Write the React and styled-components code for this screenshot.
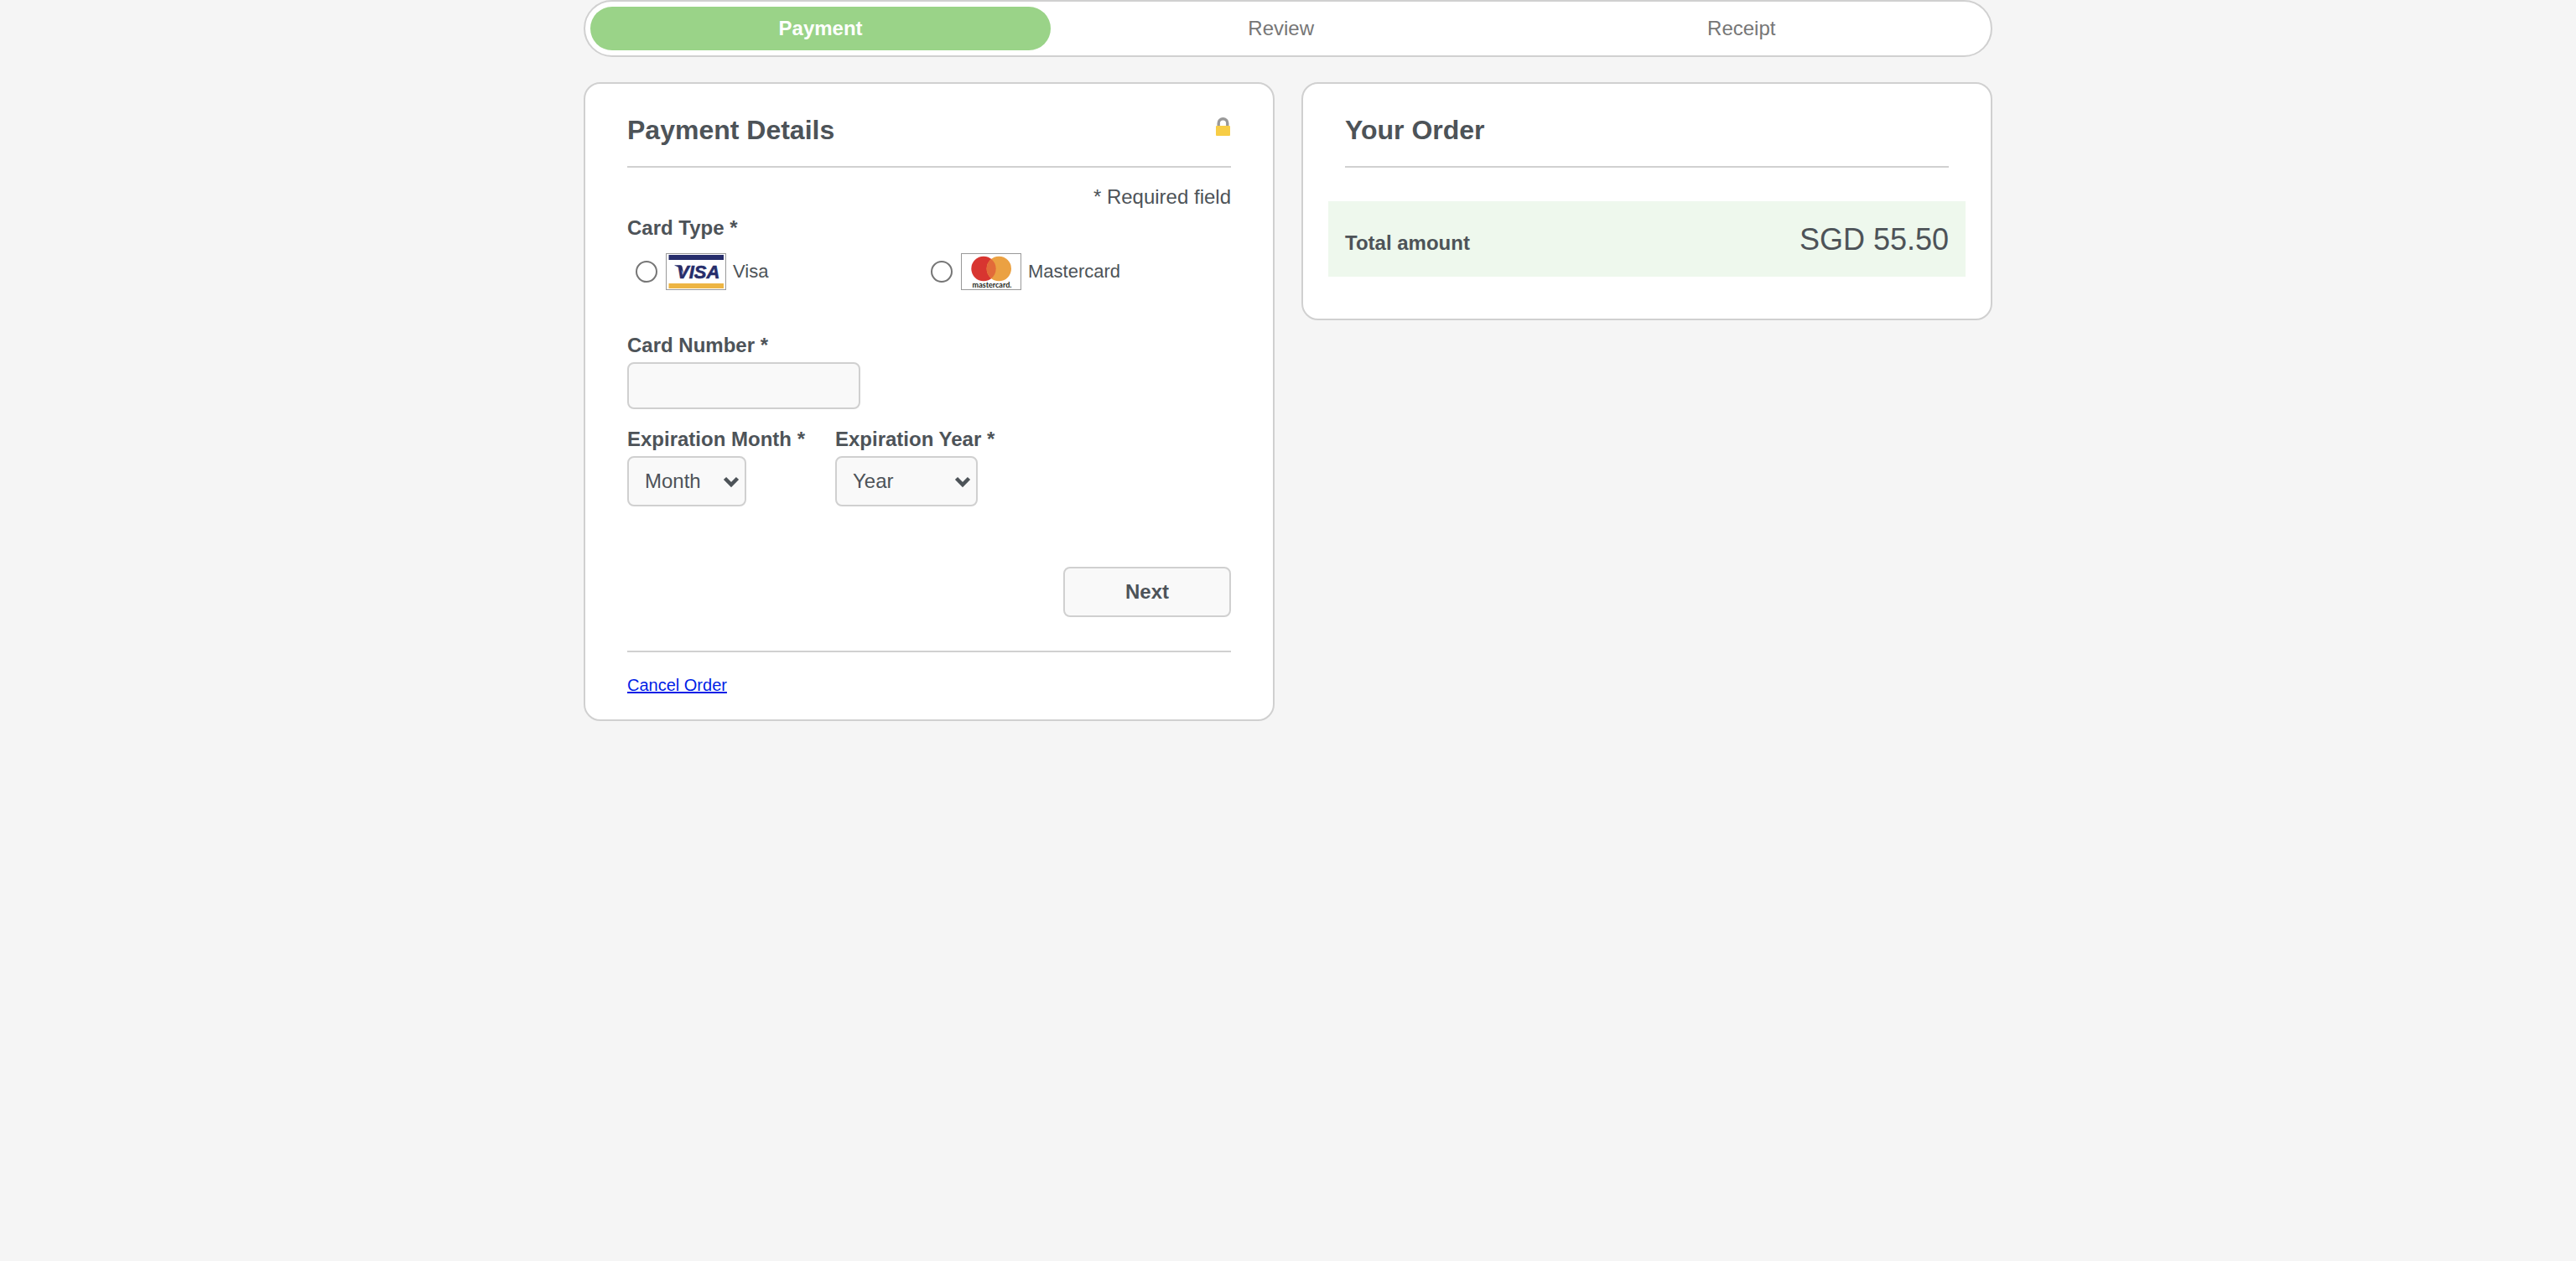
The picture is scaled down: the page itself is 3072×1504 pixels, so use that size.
import React from "react";
import styled, { createGlobalStyle, css } from "styled-components";

const color = {
  page: "#f5f5f5",
  surface: "#ffffff",
  field: "#f9f9f9",
  line: "#d0d0d0",
  text: "#4d5358",
  muted: "#767676",
  active: "#9ad388",
  highlight: "#eef8ed",
  link: "#001ee6",
};

const GlobalStyle = createGlobalStyle`
  *, *::before, *::after { box-sizing: border-box; }
  body {
    margin: 0;
    background: ${color.page};
    color: ${color.text};
    font-family: Arial, "Liberation Sans", sans-serif;
    font-size: 24px;
    line-height: 34px;
  }
`;

const Page = styled.div`
  max-width: 1680px;
  margin: 0 auto;
`;

const Steps = styled.ol`
  display: flex;
  margin: 0 0 30px;
  padding: 6px;
  list-style: none;
  background: ${color.surface};
  border: 2px solid ${color.line};
  border-radius: 34px;
`;

const Step = styled.li`
  width: 33%;
  border-radius: 26px;
  line-height: 52px;
  text-align: center;
  color: ${color.muted};
  ${({ $active }) =>
    $active &&
    css`
      background: ${color.active};
      color: #ffffff;
      font-weight: bold;
    `}
`;

const Columns = styled.main`
  display: grid;
  grid-template-columns: 1fr 1fr;
  gap: 32px;
  align-items: start;
`;

const Card = styled.section`
  padding: 36px 50px ${({ $bottom }) => $bottom}px;
  background: ${color.surface};
  border: 2px solid ${color.line};
  border-radius: 20px;
`;

const CardHeader = styled.header`
  display: flex;
  justify-content: space-between;
  padding-bottom: 24px;
  border-bottom: 2px solid ${color.line};
`;

const CardTitle = styled.h1`
  margin: 0;
  font-size: 32px;
  line-height: 38px;
`;

const LockIcon = styled.svg`
  width: 20px;
  height: 24px;
  margin-top: 3px;
`;

const RequiredNote = styled.p`
  margin: 18px 0 0;
  text-align: right;
`;

const Form = styled.form`
  display: flex;
  flex-direction: column;
  gap: 16px;
`;

const labelText = css`
  display: block;
  padding: 0;
  font-weight: bold;
  line-height: 40px;
`;

const Label = styled.label`
  ${labelText}
`;

const Fieldset = styled.fieldset`
  min-width: 0;
  margin: 0;
  padding: 0;
  border: 0;
`;

const Legend = styled.legend`
  ${labelText}
`;

const CardTypes = styled.div`
  display: grid;
  grid-template-columns: 1fr 1fr;
  padding: 10px 8px 30px;
`;

const CardOption = styled.label`
  display: flex;
  align-items: center;
  font-size: 22px;
  line-height: 44px;
`;

const Radio = styled.input`
  appearance: none;
  width: 26px;
  height: 26px;
  margin: 0 10px 0 2px;
  border: 2px solid ${color.muted};
  border-radius: 50%;
  background: ${color.surface};
  &:checked {
    box-shadow: inset 0 0 0 4px ${color.surface};
    background: ${color.muted};
  }
`;

const CardLogo = styled.svg`
  width: 72px;
  height: 44px;
  margin-right: 8px;
`;

const control = css`
  display: block;
  margin: 0;
  border: 2px solid ${color.line};
  border-radius: 8px;
  background: ${color.field};
  color: ${color.text};
  font: inherit;
`;

const TextInput = styled.input`
  ${control}
  width: 278px;
  height: 56px;
  padding: 0 20px;
`;

const ExpiryRow = styled.div`
  display: flex;
  gap: 36px;
`;

const SelectBox = styled.div`
  position: relative;
  width: ${({ $width }) => $width}px;
`;

const Select = styled.select`
  ${control}
  appearance: none;
  width: 100%;
  height: 60px;
  padding: 0 32px 0 19px;
`;

const Chevron = styled.svg`
  position: absolute;
  top: 24px;
  right: 8px;
  width: 20px;
  height: 14px;
  pointer-events: none;
`;

const Actions = styled.div`
  display: flex;
  justify-content: flex-end;
  margin-top: 56px;
`;

const NextButton = styled.button`
  ${control}
  width: 200px;
  height: 60px;
  font-weight: bold;
`;

const CardFooter = styled.footer`
  margin-top: 40px;
  padding-top: 25px;
  border-top: 2px solid ${color.line};
  font-size: 20px;
  line-height: 28px;
`;

const CancelLink = styled.a`
  display: block;
  width: fit-content;
  color: ${color.link};
`;

const Total = styled.dl`
  display: flex;
  justify-content: space-between;
  align-items: baseline;
  margin: 40px -20px 0;
  padding: 24px 20px 22px;
  background: ${color.highlight};
`;

const TotalLabel = styled.dt`
  font-weight: bold;
  line-height: 28px;
`;

const TotalAmount = styled.dd`
  margin: 0;
  font-size: 36px;
  line-height: 44px;
`;

function VisaLogo() {
  return (
    <CardLogo viewBox="0 0 72 44" aria-hidden="true">
      <rect x="0.5" y="0.5" width="71" height="43" fill="#fff" stroke="#999" />
      <rect x="3.5" y="2" width="65.5" height="6" fill="#262d6b" />
      <rect x="3.5" y="36" width="65.5" height="6" fill="#edb544" />
      <path d="M10.500 14.200h6.600c1.400 0 2.200.7 2.500 2l1.700 8.200c-2-5-5.400-8.200-10.800-9.700z" fill="#262d6b" />
      <text
        x="13"
        y="30"
        fill="#262d6b"
        stroke="#262d6b"
        strokeWidth="0.6"
        fontFamily="Arial, 'Liberation Sans', sans-serif"
        fontSize="22"
        fontWeight="bold"
        fontStyle="italic"
      >
        VISA
      </text>
    </CardLogo>
  );
}

function MastercardLogo() {
  return (
    <CardLogo viewBox="0 0 72 44" aria-hidden="true">
      <rect x="0.5" y="0.5" width="71" height="43" fill="#fff" stroke="#999" />
      <circle cx="27" cy="18.500" r="14.700" fill="#d83530" />
      <circle cx="45.300" cy="18.500" r="14.700" fill="#eba142" />
      <path d="M36.150 7a14.700 14.700 0 0 1 0 23a14.700 14.700 0 0 1 0-23z" fill="#e26b39" />
      <text
        x="37"
        y="40.500"
        textAnchor="middle"
        fill="#231f20"
        fontFamily="Lato, sans-serif"
        fontSize="9"
        fontWeight="bold"
      >
        mastercard.
      </text>
    </CardLogo>
  );
}

function SelectField({ id, label, placeholder, options, width }) {
  return (
    <div>
      <Label htmlFor={id}>{label} *</Label>
      <SelectBox $width={width}>
        <Select id={id} defaultValue="" required>
          <option value="">{placeholder}</option>
          {options.map((o) => (
            <option key={o}>{o}</option>
          ))}
        </Select>
        <Chevron viewBox="0 0 20 14" aria-hidden="true">
          <path d="M2.500 2.500 10 10l7.500-7.500" fill="none" stroke={color.text} strokeWidth="4.500" />
        </Chevron>
      </SelectBox>
    </div>
  );
}

const steps = ["Payment", "Review", "Receipt"];
const cardTypes = [
  { name: "Visa", Logo: VisaLogo },
  { name: "Mastercard", Logo: MastercardLogo },
];
const months = Array.from({ length: 12 }, (_, i) => String(i + 1).padStart(2, "0"));
const years = Array.from({ length: 12 }, (_, i) => String(2024 + i));

export default function App() {
  return (
    <>
      <GlobalStyle />
      <Page>
        <Steps>
          {steps.map((s, i) => (
            <Step key={s} $active={i === 0} aria-current={i === 0 ? "step" : undefined}>
              {s}
            </Step>
          ))}
        </Steps>
        <Columns>
          <Card $bottom={27}>
            <CardHeader>
              <CardTitle>Payment Details</CardTitle>
              <LockIcon viewBox="0 0 20 24" aria-hidden="true">
                <path d="M5.200 12V8a5.300 5.300 0 0 1 10.600 0v4" fill="none" stroke="#999" strokeWidth="3.400" />
                <rect x="2" y="11" width="17" height="12" rx="1" fill="#f7cd46" />
              </LockIcon>
            </CardHeader>
            <RequiredNote>* Required field</RequiredNote>
            <Form onSubmit={(e) => e.preventDefault()}>
              <Fieldset>
                <Legend>Card Type *</Legend>
                <CardTypes>
                  {cardTypes.map(({ name, Logo }) => (
                    <CardOption key={name}>
                      <Radio type="radio" name="cardType" value={name} />
                      <Logo />
                      {name}
                    </CardOption>
                  ))}
                </CardTypes>
              </Fieldset>
              <div>
                <Label htmlFor="cardNumber">Card Number *</Label>
                <TextInput id="cardNumber" type="text" inputMode="numeric" required />
              </div>
              <ExpiryRow>
                <SelectField id="expMonth" label="Expiration Month" placeholder="Month" options={months} width={142} />
                <SelectField id="expYear" label="Expiration Year" placeholder="Year" options={years} width={170} />
              </ExpiryRow>
              <Actions>
                <NextButton type="submit">Next</NextButton>
              </Actions>
            </Form>
            <CardFooter>
              <CancelLink href="#cancel">Cancel Order</CancelLink>
            </CardFooter>
          </Card>
          <Card $bottom={50}>
            <CardHeader>
              <CardTitle as="h2">Your Order</CardTitle>
            </CardHeader>
            <Total>
              <TotalLabel>Total amount</TotalLabel>
              <TotalAmount>SGD 55.50</TotalAmount>
            </Total>
          </Card>
        </Columns>
      </Page>
    </>
  );
}
